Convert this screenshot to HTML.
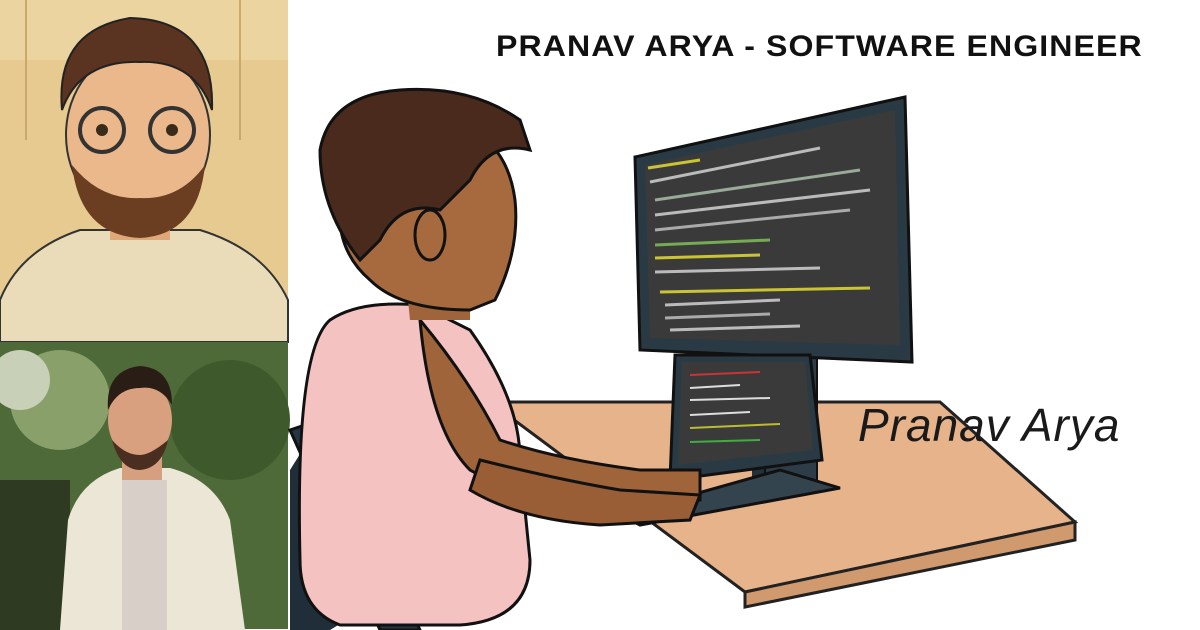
<!DOCTYPE html>
<html><head><meta charset="utf-8"><style>
html,body{margin:0;padding:0;background:#fff;width:1200px;height:630px;overflow:hidden}
.t{position:absolute;left:496px;top:30px;font:900 30px "Liberation Sans",sans-serif;letter-spacing:1px;color:#111;transform:scaleX(1.07);transform-origin:left;white-space:nowrap}
.n{position:absolute;left:858px;top:398px;font:italic 46px "Liberation Sans",sans-serif;color:#1a1a1a;letter-spacing:1px}
</style></head><body>
<svg width="1200" height="630" style="position:absolute;left:0;top:0">
<rect x="0" y="0" width="288" height="342" fill="#e6ca90"/>
<rect x="0" y="0" width="288" height="60" fill="#ecd4a0"/>
<line x1="26" y1="0" x2="26" y2="140" stroke="#c9a86c" stroke-width="2"/>
<line x1="240" y1="0" x2="240" y2="140" stroke="#c9a86c" stroke-width="2"/>
<path d="M0 300 Q20 250 80 230 L200 230 Q265 250 288 300 L288 342 L0 342Z" fill="#eadcb8" stroke="#333" stroke-width="2"/>
<rect x="110" y="180" width="60" height="60" fill="#e0a878"/>
<ellipse cx="138" cy="135" rx="72" ry="85" fill="#eab88a" stroke="#333" stroke-width="2"/>
<path d="M62 110 Q55 30 130 18 Q215 20 212 110 Q195 60 140 62 Q80 60 62 110Z" fill="#5a3420" stroke="#222" stroke-width="2"/>
<path d="M72 165 Q80 235 140 238 Q198 235 205 165 Q180 200 140 198 Q100 200 72 165Z" fill="#6b3e22"/>
<circle cx="102" cy="130" r="22" fill="none" stroke="#333" stroke-width="4"/>
<circle cx="172" cy="130" r="22" fill="none" stroke="#333" stroke-width="4"/>
<circle cx="102" cy="130" r="6" fill="#3a2a1a"/><circle cx="172" cy="130" r="6" fill="#3a2a1a"/>
<rect x="0" y="342" width="288" height="287" fill="#4e6a38"/>
<circle cx="60" cy="400" r="50" fill="#8aa06a"/><circle cx="230" cy="420" r="60" fill="#3e5a2c"/>
<circle cx="20" cy="380" r="30" fill="#c8d0b8"/><rect x="0" y="480" width="70" height="150" fill="#2e3a22"/>
<path d="M60 630 L68 520 Q80 480 120 468 L170 468 Q215 480 230 520 L245 630Z" fill="#ebe6d6"/>
<rect x="122" y="480" width="45" height="150" fill="#d8cfc8"/>
<rect x="122" y="440" width="40" height="40" fill="#d69f80"/>
<ellipse cx="140" cy="420" rx="32" ry="40" fill="#d9a080"/>
<path d="M108 410 Q105 370 140 366 Q172 368 172 405 Q160 385 140 388 Q118 388 108 410Z" fill="#2a1d16"/>
<path d="M112 440 Q120 470 140 470 Q162 468 168 440 Q150 455 140 455 Q125 455 112 440Z" fill="#4a2e20"/>
<path d="M290 470 L315 430 L380 600 L330 630 L290 630Z" fill="#1f2e38"/>
<path d="M290 430 L320 420 L420 630 L380 630Z" fill="#243644" stroke="#111" stroke-width="3"/>
<path d="M490 402 L940 402 L1075 522 L745 592 Z" fill="#e6b38a" stroke="#222" stroke-width="3"/>
<path d="M745 592 L1075 522 L1075 540 L745 607Z" fill="#d09a6e" stroke="#222" stroke-width="3"/>
<rect x="752" y="350" width="60" height="130" fill="#22303a"/>
<rect x="765" y="350" width="52" height="140" fill="#2c3c48" stroke="#111" stroke-width="2"/>
<path d="M635 157 L905 97 L912 362 L640 350Z" fill="#2a3a44" stroke="#111" stroke-width="3"/>
<path d="M645 165 L895 110 L900 345 L650 338Z" fill="#3a3a3a"/>
<g stroke-width="3" fill="none">
<path d="M648 168 L700 160" stroke="#c9c335"/><path d="M650 182 L820 148" stroke="#bbb"/>
<path d="M655 200 L860 170" stroke="#9a9"/><path d="M655 215 L870 190" stroke="#bbb"/>
<path d="M655 230 L850 210" stroke="#aaa"/><path d="M655 245 L770 240" stroke="#7a5"/>
<path d="M655 258 L760 255" stroke="#c9c335"/><path d="M655 272 L820 268" stroke="#bbb"/>
<path d="M660 292 L870 288" stroke="#c9c335"/><path d="M665 305 L780 300" stroke="#bbb"/>
<path d="M665 318 L770 314" stroke="#aaa"/><path d="M670 330 L800 326" stroke="#bbb"/>
</g>
<path d="M675 355 L810 355 L822 460 L670 480Z" fill="#2a3a44" stroke="#111" stroke-width="3"/>
<path d="M682 362 L805 362 L813 450 L678 465Z" fill="#3a3a3a"/>
<g stroke-width="2"><path d="M690 375 L760 372" stroke="#c33"/><path d="M690 388 L740 385" stroke="#ddd"/><path d="M690 400 L770 398" stroke="#ddd"/><path d="M690 415 L750 412" stroke="#ddd"/><path d="M690 428 L780 424" stroke="#bb3"/><path d="M690 442 L760 440" stroke="#4a4"/></g>
<path d="M620 515 L780 470 L840 488 L640 525Z" fill="#34444e" stroke="#111" stroke-width="3"/>
<path d="M300 560 Q295 350 330 320 Q360 300 420 305 L470 330 Q520 400 520 460 L530 560 Q530 620 460 625 L340 625 Q300 610 300 560Z" fill="#f5c2c2" stroke="#111" stroke-width="3"/>
<path d="M420 320 Q470 380 500 440 Q560 460 640 470 L700 470 L700 500 L620 505 Q520 500 470 470 Q430 430 420 320Z" fill="#a0643a" stroke="#111" stroke-width="3"/>
<path d="M480 460 Q560 480 620 490 L700 495 L690 520 L600 525 Q520 520 470 490Z" fill="#9a5e36" stroke="#111" stroke-width="3"/>
<path d="M405 270 L470 270 L470 320 L410 320Z" fill="#a0643a"/>
<path d="M340 200 Q350 130 430 120 Q505 125 515 200 Q520 250 495 300 L470 310 Q400 310 370 280 Q335 250 340 200Z" fill="#a66a3e" stroke="#111" stroke-width="3"/>
<path d="M320 150 Q330 95 400 90 Q470 85 520 120 L530 150 Q490 140 470 180 L440 210 Q400 200 380 240 L360 260 Q320 210 320 150Z" fill="#4a2a1c" stroke="#111" stroke-width="3"/>
<ellipse cx="430" cy="235" rx="15" ry="25" fill="#a66a3e" stroke="#111" stroke-width="3"/>
</svg>
<div class="t">PRANAV ARYA - SOFTWARE ENGINEER</div>
<div class="n">Pranav Arya</div>
</body></html>
